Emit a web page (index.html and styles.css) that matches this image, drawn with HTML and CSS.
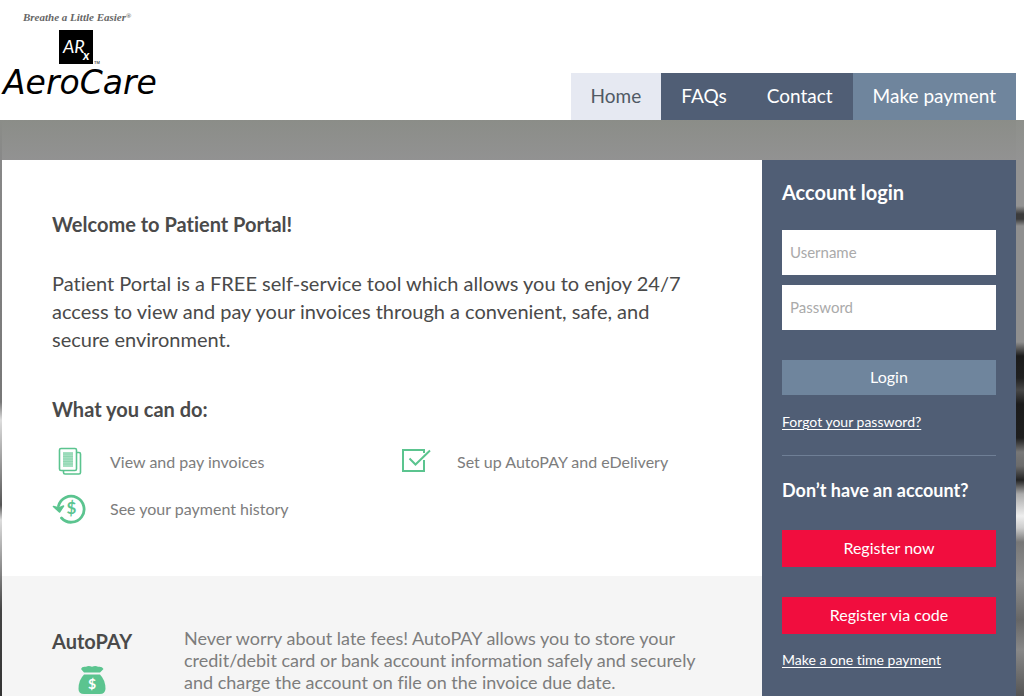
FILE: index.html
```html
<!DOCTYPE html>
<html lang="en">
<head>
<meta charset="utf-8">
<meta name="viewport" content="width=device-width, initial-scale=1">
<title>AeroCare Patient Portal</title>
<link rel="stylesheet" href="styles.css">
</head>
<body>
<header class="header">
  <a class="logo" href="#" aria-label="AeroCare home">
    <svg class="logo-art" viewBox="0 0 160 104" width="160" height="104">
      <text class="logo-tag" x="23" y="21">Breathe a Little Easier<tspan class="logo-reg" dy="-3">®</tspan></text>
      <rect x="59" y="30" width="34" height="34" fill="#000"/>
      <text class="logo-mono" x="63" y="53">AR</text>
      <text class="logo-x" x="83" y="60">x</text>
      <text class="logo-tm" x="94" y="64">TM</text>
      <text class="logo-name" x="3" y="94">AeroCare</text>
    </svg>
  </a>
  <nav class="nav" aria-label="Main">
    <a class="nav-link nav-current" href="#">Home</a>
    <a class="nav-link" href="#">FAQs</a>
    <a class="nav-link" href="#">Contact</a>
    <a class="nav-link nav-pay" href="#">Make payment</a>
  </nav>
</header>
<div class="stage">
  <div class="panel">
    <main class="content">
      <section class="intro">
        <h1 class="heading">Welcome to Patient Portal!</h1>
        <p class="lead">Patient Portal is a FREE self-service tool which allows you to enjoy 24/7 access to view and pay your invoices through a convenient, safe, and secure environment.</p>
        <h2 class="heading">What you can do:</h2>
        <ul class="features">
          <li class="feature">
            <svg class="icon" viewBox="0 0 36 32" width="36" height="32" fill="none" stroke="#5bc48f">
              <path d="M25 7.500h2q1.500 0 1.500 1.500v18.500q0 1.500-1.500 1.500H13q-1.500 0-1.500-1.500v-2" stroke-width="1.600"/>
              <rect x="7.500" y="3.500" width="17" height="22" rx="1.500" stroke-width="1.600"/>
              <rect x="11" y="7" width="10" height="15" fill="#a5dfc1" stroke="none"/>
              <path d="M11 9h10M11 11.500h10M11 14h10M11 16.500h10M11 19h10" stroke="#8fd6b1" stroke-width="1"/>
            </svg>
            View and pay invoices
          </li>
          <li class="feature">
            <svg class="icon" viewBox="0 0 36 32" width="36" height="32" fill="none" stroke="#5bc48f" stroke-width="2">
              <path d="M25 8V5H4v21h21V15"/>
              <path d="M10.500 13.500l6 6L31 5.500"/>
            </svg>
            Set up AutoPAY and eDelivery
          </li>
          <li class="feature">
            <svg class="icon" viewBox="0 0 36 32" width="36" height="32">
              <path d="M6.500 14A13 13 0 1 1 9.500 26" fill="none" stroke="#5bc48f" stroke-width="2.800" stroke-linecap="round"/>
              <path d="M1.500 14.500l5.500 1.500 4.500-2-4 6z" fill="#5bc48f" stroke="#5bc48f" stroke-width="1.600" stroke-linejoin="round"/>
              <text class="icon-dollar" x="19.500" y="22" text-anchor="middle" fill="#5bc48f">$</text>
            </svg>
            See your payment history
          </li>
        </ul>
      </section>
      <section class="autopay">
        <div class="autopay-title">
          <h2 class="heading">AutoPAY</h2>
          <svg class="bag" viewBox="0 0 28 30" width="28" height="30">
            <path d="M6 7.500L3 4Q4 1 8 1.800 10.500 0 14 1.800 17.500 0 20 1.800 24 1 25.500 4L22 7.500Z" fill="#5bc48f"/>
            <path d="M6 9.500H22Q27.500 15 27.500 24 27 29 22 29H6Q.5 29 .5 24 .5 15 6 9.500Z" fill="#5bc48f"/>
            <text class="bag-dollar" x="14" y="24" text-anchor="middle" fill="#fff">$</text>
          </svg>
        </div>
        <p class="autopay-text">Never worry about late fees! AutoPAY allows you to store your credit/debit card or bank account information safely and securely and charge the account on file on the invoice due date.</p>
      </section>
    </main>
    <aside class="sidebar">
      <form class="login">
        <h2 class="side-title">Account login</h2>
        <input class="field" type="text" placeholder="Username" aria-label="Username">
        <input class="field" type="password" placeholder="Password" aria-label="Password">
        <button class="button" type="button">Login</button>
        <a class="side-link" href="#">Forgot your password?</a>
      </form>
      <section class="register">
        <h2 class="side-title side-small">Don’t have an account?</h2>
        <button class="button button-red" type="button">Register now</button>
        <button class="button button-red" type="button">Register via code</button>
        <a class="side-link" href="#">Make a one time payment</a>
      </section>
    </aside>
  </div>
</div>
</body>
</html>
```
FILE: styles.css
```css
* { box-sizing: border-box; }
body {
  margin: 0;
  min-height: 100vh;
  display: flex;
  flex-direction: column;
  background: #fff;
  color: #4a4a4a;
  font-family: Lato, "Open Sans", sans-serif;
  font-variant-ligatures: none;
}
h1, h2, p, ul { margin: 0; padding: 0; }
a { color: inherit; }

.header {
  display: flex;
  justify-content: space-between;
  align-items: flex-end;
  height: 120px;
  padding-right: 8px;
}
.logo { align-self: flex-start; }
.logo-art { display: block; }
.logo-tag { font: italic bold 11px "Liberation Serif", serif; fill: #666; }
.logo-reg { font-size: 7px; }
.logo-mono { font: italic 18px Lato, sans-serif; fill: #fff; }
.logo-x { font: italic bold 13px Lato, sans-serif; fill: #fff; }
.logo-tm { font: 4px "Liberation Sans", sans-serif; }
.logo-name { font: italic 33px "DejaVu Sans", sans-serif; fill: #000; }

.nav { display: flex; background: #505e75; }
.nav-link {
  padding: 0 20px 2px;
  color: #fff;
  font-size: 19px;
  line-height: 45px;
  text-decoration: none;
}
.nav-current { background: #e6e9f2; color: #505965; }
.nav-pay { background: #6f859d; }

.stage {
  flex: 1;
  display: flex;
  padding: 40px 8px 0 2px;
  background:
    linear-gradient(#8e908b, #939393 40px, #939393 86px, #3b3b3b 94px, #3b3b3b 99px, #8f8f8f 106px, #8f8f8f 222px, #1b1b1b 236px, #202020 258px, #474747 270px, #1b1b1b 284px, #1e1e1e 318px, #777 332px, #6b6b6b 346px, #222 360px, #aaa 374px, #eee 396px, #ccc 408px, #777 422px, #909090 460px, #666 500px, #888 530px, #555) right / 8px 100% no-repeat,
    linear-gradient(#8b8d88, #888 40px, #777 282px, #ddd 300px, #555 385px, #ddd 400px, #444 490px, #333) left / 2px 100% no-repeat,
    linear-gradient(#8b8d88, #929292 40px);
}
.panel { flex: 1; display: flex; }
.content { flex: 1; display: flex; flex-direction: column; background: #f5f5f5; }

.intro { padding: 50px 50px 52px; background: #fff; }
.heading { font-size: 20px; line-height: 28px; font-weight: bold; }
.lead { margin: 31px 0 42px; padding-right: 20px; font-size: 20px; line-height: 28px; }
.features {
  display: grid;
  grid-template-columns: 1fr 1fr;
  gap: 15px 34px;
  margin-top: 22px;
  list-style: none;
}
.feature {
  display: flex;
  align-items: center;
  gap: 22px;
  color: #7d7d7d;
  font-size: 16px;
}
.icon-dollar { font: bold 17px Lato, sans-serif; }
.bag-dollar { font: bold 14px Lato, sans-serif; }

.autopay { display: flex; padding: 51px 50px 0; }
.autopay-title { flex: 0 0 132px; }
.bag { display: block; margin: 10px 0 0 26px; }
.autopay-text { color: #7d7d7d; font-size: 18px; line-height: 22px; }

.sidebar { flex: 0 0 254px; padding: 18px 20px 0; background: #505e75; color: #fff; }
.login {
  display: flex;
  flex-direction: column;
  padding-bottom: 22px;
  border-bottom: 1px solid #6f7f96;
}
.side-title { font-size: 20px; line-height: 28px; font-weight: bold; margin-bottom: 24px; }
.side-small { font-size: 18px; margin-bottom: 26px; }
.field {
  width: 100%;
  height: 45px;
  margin-bottom: 10px;
  padding: 0 8px 2px;
  border: 0;
  border-radius: 0;
  background: #fff;
  font: 15px Lato, sans-serif;
}
.field::placeholder { color: #aaa; opacity: 1; }
.button {
  width: 100%;
  height: 35px;
  margin-top: 20px;
  padding: 0 0 2px;
  border: 0;
  background: #6f859d;
  color: #fff;
  font: 16px Lato, sans-serif;
}
.side-link {
  align-self: flex-start;
  margin-top: 16px;
  font-size: 14px;
  line-height: 22px;
  text-decoration-thickness: 1px;
  text-underline-offset: 2px;
}
.register { display: flex; flex-direction: column; padding-top: 20px; }
.button-red { height: 37px; margin: 0 0 30px; background: #f10d3e; }
.register .side-link { margin-top: -15px; }
```
